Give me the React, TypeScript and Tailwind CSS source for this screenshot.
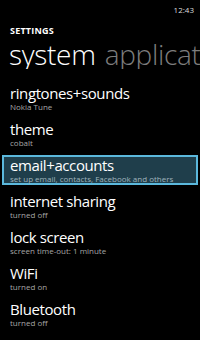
import React from "react";

const items = [
  { t: "ringtones+sounds", s: "Nokia Tune" },
  { t: "theme", s: "cobalt" },
  { t: "email+accounts", s: "set up email, contacts, Facebook and others", hl: true },
  { t: "internet sharing", s: "turned off" },
  { t: "lock screen", s: "screen time-out: 1 minute" },
  { t: "WiFi", s: "turned on" },
  { t: "Bluetooth", s: "turned off" },
];

export default function App() {
  return (
    <div
      className="w-[200px] h-[340px] bg-black text-white overflow-hidden"
      style={{ fontFamily: '"Open Sans", "Noto Sans", sans-serif' }}
    >
      <div className="h-[20px] pt-[5px] pr-[6px] flex justify-end">
        <span className="text-[8px] leading-[10px] text-[#dcdcdc]">12:43</span>
      </div>
      <div className="h-[16px] pt-[6px] pl-[10px]">
        <div className="text-[9px] leading-[10px] font-bold tracking-[0.2px]">SETTINGS</div>
      </div>
      <div className="pt-[3px] pl-[9px] whitespace-nowrap overflow-hidden">
        <div className="text-[28px] leading-[30px] font-light tracking-[-0.3px]">
          <span className="text-white">system</span>
          <span className="text-[#7d7d7d] ml-[9px]">applications</span>
        </div>
      </div>
      <div className="mt-[14px] px-[2px]">
        {items.map((it) =>
          it.hl ? (
            <div
              key={it.t}
              className="h-[30px] mb-[6px] border-2 border-[#5bb8dc] bg-[#1f3e4b] px-[6px]"
            >
              <div className="text-[15px] leading-[17px] tracking-[-0.4px] whitespace-nowrap">{it.t}</div>
              <div className="text-[8px] leading-[10px] text-[#9fb4bd] whitespace-nowrap">
                {it.s}
              </div>
            </div>
          ) : (
            <div key={it.t} className="h-[36px] pt-[2px] px-[8px]">
              <div className="text-[15px] leading-[17px] tracking-[-0.4px] whitespace-nowrap">{it.t}</div>
              <div className="text-[8px] leading-[10px] text-[#a6a6a6] whitespace-nowrap">
                {it.s}
              </div>
            </div>
          )
        )}
      </div>
    </div>
  );
}
